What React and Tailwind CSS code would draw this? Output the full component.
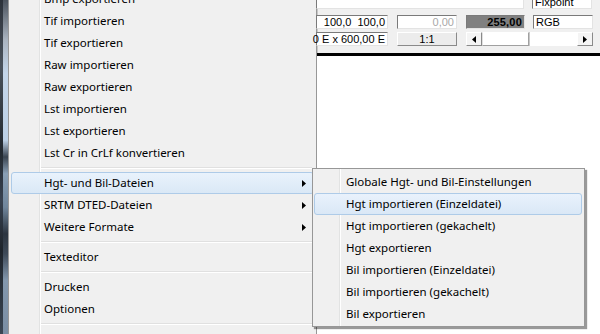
import React from "react";

const mainItems = [
  { t: "Bmp exportieren" },
  { t: "Tif importieren" },
  { t: "Tif exportieren" },
  { t: "Raw importieren" },
  { t: "Raw exportieren" },
  { t: "Lst importieren" },
  { t: "Lst exportieren" },
  { t: "Lst Cr in CrLf konvertieren" },
  { sep: true },
  { t: "Hgt- und Bil-Dateien", sub: true, active: true },
  { t: "SRTM DTED-Dateien", sub: true },
  { t: "Weitere Formate", sub: true },
  { sep: true },
  { t: "Texteditor" },
  { sep: true },
  { t: "Drucken" },
  { t: "Optionen" },
  { sep: true },
  { t: "Landschaft und Karte als EMF speichern" },
];

const subItems = [
  { t: "Globale Hgt- und Bil-Einstellungen" },
  { t: "Hgt importieren (Einzeldatei)", active: true },
  { t: "Hgt importieren (gekachelt)" },
  { t: "Hgt exportieren" },
  { t: "Bil importieren (Einzeldatei)" },
  { t: "Bil importieren (gekachelt)" },
  { t: "Bil exportieren" },
];

function Arrow() {
  return (
    <svg width="4" height="7" viewBox="0 0 4 7" className="shrink-0">
      <polygon points="0,0 4,3.5 0,7" fill="#000" />
    </svg>
  );
}

function Separator({ indent }) {
  return (
    <div className={`h-[8px] flex items-center mr-[2px] ${indent}`}>
      <div className="w-full border-t border-[#e0e0e0] border-b border-b-white" />
    </div>
  );
}

function Row({ item, pad }) {
  return (
    <div
      className={`h-[22px] flex items-center justify-between rounded-[3px] border ${pad} ${
        item.active
          ? "border-[#aecbe8] bg-[linear-gradient(to_bottom,#e9f2fc,#dae8f6)]"
          : "border-transparent"
      }`}
    >
      <span className="whitespace-nowrap">{item.t}</span>
      {item.sub && <Arrow />}
    </div>
  );
}

function Field({ w, children, className = "" }) {
  return (
    <div
      className={`${w} h-[14px] bg-white border border-t-[#7a7a7a] border-l-[#7a7a7a] border-b-[#e3e3e3] border-r-[#e3e3e3] flex items-center px-[2px] leading-none ${className}`}
    >
      {children}
    </div>
  );
}

function ScrollBtn({ dir }) {
  return (
    <div className="w-[16px] h-full bg-[#f4f4f4] border border-t-white border-l-white border-b-[#8a8a8a] border-r-[#8a8a8a] flex items-center justify-center">
      <svg width="4" height="7" viewBox="0 0 4 7">
        <polygon points={dir === "l" ? "4,0 0,3.5 4,7" : "0,0 4,3.5 0,7"} fill="#000" />
      </svg>
    </div>
  );
}

export default function App() {
  return (
    <div className="w-[600px] h-[334px] flex overflow-hidden relative bg-white font-['Noto_Sans',sans-serif] text-[11.5px] text-black">
      {/* window behind */}
      <div className="w-[8px] h-full flex shrink-0">
        <div className="w-[3px] h-full bg-[linear-gradient(to_bottom,#2c323a,#4a525c_20%,#22282f_45%,#384250_60%,#1e242b_75%,#3a4654)]" />
        <div className="w-[5px] h-full bg-[linear-gradient(to_bottom,#4a525c_0%,#aab4c0_12%,#c4d6ea_22%,#bcd0e6_42%,#3a4450_47%,#8aa0b6_52%,#70869c_62%,#2c3540_70%,#3e4a58_76%,#8398ae_84%,#7a8ea4_100%)]" />
      </div>

      {/* main menu */}
      <div className="w-[309px] h-full shrink-0 bg-[#f0f0f0] border-l border-r border-[#979797] overflow-hidden bg-[linear-gradient(to_right,transparent_30px,#e2e3e3_30px,#e2e3e3_31px,#ffffff_31px,#ffffff_32px,transparent_32px)]">
        <div className="-mt-[12px] px-[2px]">
          {mainItems.map((it, i) =>
            it.sep ? (
              <Separator key={i} indent="ml-[30px]" />
            ) : (
              <Row key={i} item={it} pad="pl-[32px] pr-[7px]" />
            )
          )}
        </div>
      </div>

      {/* application behind */}
      <div className="flex-1 h-full flex flex-col font-['Liberation_Sans',sans-serif] text-[11px]">
        <div className="h-[58px] -mt-[5px] bg-[#f0f0f0] flex flex-col shadow-[inset_1px_0_0_#c8c8c8]">
          <div className="flex gap-[8px] h-[14px]">
            <Field w="w-[208px]" className="-ml-[1px]" />
            <Field w="w-[60px]">Fixpoint</Field>
          </div>
          <div className="flex h-[14px] mt-[6px]">
            <Field w="w-[72px]" className="-ml-[1px] justify-end">100,0&nbsp;&nbsp;100,0</Field>
            <Field w="w-[60px]" className="ml-[9px] justify-end text-[#a8a8a8]">0,00</Field>
            <Field w="w-[59px]" className="ml-[9px] justify-end !bg-[#808080] font-bold tracking-[0.2px]">255,00</Field>
            <Field w="w-[60px]" className="ml-[8px]">RGB</Field>
          </div>
          <div className="flex h-[14px] mt-[3px]">
            <Field w="w-[72px]" className="-ml-[1px] justify-end whitespace-nowrap">0 E x 600,00 E</Field>
            <div className="ml-[9px] w-[60px] h-full bg-[#ececec] border border-t-white border-l-white border-b-[#8a8a8a] border-r-[#8a8a8a] flex items-center justify-center leading-none">
              1:1
            </div>
            <div className="ml-[9px] w-[127px] h-full flex bg-white">
              <ScrollBtn dir="l" />
              <div className="w-[47px] h-full bg-white border border-t-white border-l-[#e0e0e0] border-b-[#a0a0a0] border-r-[#a0a0a0]" />
              <div className="flex-1 h-full bg-white border-l border-[#c8c8c8]" />
              <ScrollBtn dir="r" />
            </div>
          </div>
        </div>
        <div className="h-[3px] bg-black" />
        <div className="flex-1 bg-white" />
      </div>

      {/* submenu */}
      <div className="absolute left-[312px] top-[168px] w-[273px] h-[159px] bg-[#f0f0f0] border border-[#979797] shadow-[2px_2px_1px_rgba(0,0,0,0.4)] bg-[linear-gradient(to_right,transparent_26px,#e2e3e3_26px,#e2e3e3_27px,#ffffff_27px,#ffffff_28px,transparent_28px)] pt-[2px] pl-[1px] pr-[2px]">
        {subItems.map((it, i) => (
          <Row key={i} item={it} pad="pl-[31px] pr-[6px]" />
        ))}
      </div>
    </div>
  );
}
